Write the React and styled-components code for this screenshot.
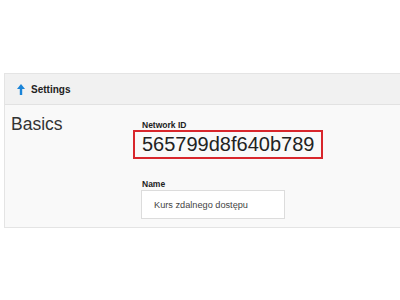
import React from "react";
import styled, { createGlobalStyle } from "styled-components";

const Global = createGlobalStyle`
  html, body { margin: 0; padding: 0; background: #fff; }
  body { font-family: "Liberation Sans", Arial, sans-serif; }
`;

const Page = styled.div`
  width: 400px;
  height: 300px;
  padding: 73px 0 0 4px;
  box-sizing: border-box;
  overflow: hidden;
`;

const Panel = styled.section`
  border: 1px solid #e4e4e4;
  border-right: none;
  background: #f9f9f9;
`;

const Header = styled.div`
  height: 30px;
  display: flex;
  align-items: center;
  gap: 6px;
  padding-left: 12px;
  background: #f1f1f1;
  border-bottom: 1px solid #e2e2e2;
`;

const HeaderTitle = styled.span`
  font-size: 10px;
  font-weight: bold;
  color: #222;
`;

const Body = styled.div`
  display: flex;
  padding: 9px 0 8px 0;
`;

const SectionTitle = styled.div`
  width: 131px;
  padding-left: 6px;
  font-size: 17.5px;
  line-height: 20px;
  color: #333;
`;

const Fields = styled.div`
  display: flex;
  flex-direction: column;
  padding-top: 6px;
`;

const Label = styled.div`
  font-size: 8.5px;
  line-height: 10px;
  font-weight: bold;
  color: #222;
  margin-top: ${(p) => p.$top || 0}px;
`;

const IdValue = styled.div`
  margin-left: -9px;
  width: 190px;
  padding-left: 7px;
  border: 2px solid #d8262c;
  box-sizing: border-box;
  font-size: 20px;
  line-height: 25px;
  color: #222;
`;

const Input = styled.div`
  margin-top: 1px;
  margin-left: -1px;
  width: 144px;
  height: 29px;
  box-sizing: border-box;
  border: 1px solid #dcdcdc;
  background: #fff;
  padding-left: 12px;
  display: flex;
  align-items: center;
  font-size: 9.2px;
  color: #444;
`;

const UpArrow = () => (
  <svg width="8" height="11" viewBox="0 0 8 11">
    <path d="M4 0 L8 5 L5.2 5 L5.2 11 L2.8 11 L2.8 5 L0 5 Z" fill="#1a84d8" />
  </svg>
);

export default function App() {
  return (
    <>
      <Global />
      <Page>
        <Panel>
          <Header>
            <UpArrow />
            <HeaderTitle>Settings</HeaderTitle>
          </Header>
          <Body>
            <SectionTitle>Basics</SectionTitle>
            <Fields>
              <Label>Network ID</Label>
              <IdValue>565799d8f640b789</IdValue>
              <Label $top={20}>Name</Label>
              <Input>Kurs zdalnego dostępu</Input>
            </Fields>
          </Body>
        </Panel>
      </Page>
    </>
  );
}
